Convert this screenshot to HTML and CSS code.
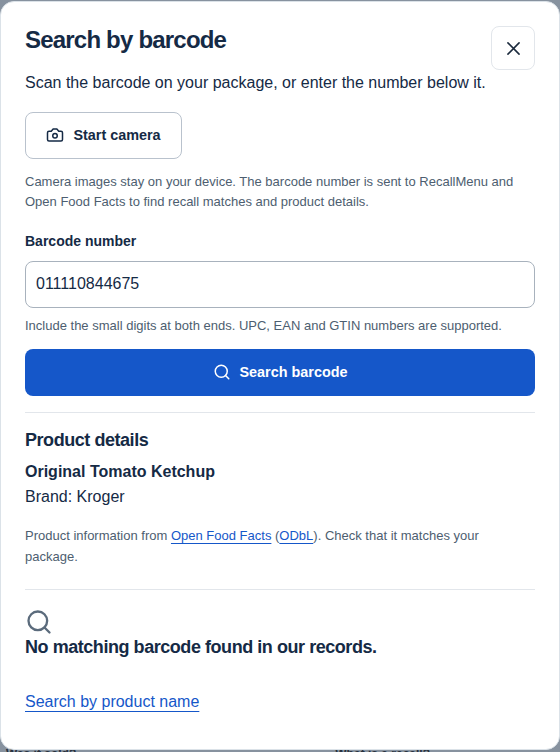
FILE: index.html
```html
<!DOCTYPE html>
<html lang="en">
<head>
<meta charset="utf-8">
<title>Search by barcode</title>
<link rel="stylesheet" href="styles.css">
</head>
<body>
<div class="backdrop-text"><span>Was it sold?</span><span>What is a recall?</span></div>
<main class="dialog">
  <header class="head">
    <h1>Search by barcode</h1>
    <button class="close" aria-label="Close">
      <svg width="13" height="13" viewBox="0 0 14 14" fill="none" stroke="#1b2a3d" stroke-width="1.7" stroke-linecap="round"><path d="M1 1l12 12M13 1L1 13"/></svg>
    </button>
  </header>
  <p class="lead">Scan the barcode on your package, or enter the number below it.</p>
  <button class="camera">
    <svg width="18" height="18" viewBox="0 0 24 24" fill="none" stroke="#152a45" stroke-width="2" stroke-linecap="round" stroke-linejoin="round"><path d="M14.5 4h-5L7 7H4a2 2 0 0 0-2 2v9a2 2 0 0 0 2 2h16a2 2 0 0 0 2-2V9a2 2 0 0 0-2-2h-3l-2.5-3z"/><circle cx="12" cy="13" r="3"/></svg>
    <span>Start camera</span>
  </button>
  <p class="note privacy">Camera images stay on your device. The barcode number is sent to RecallMenu and Open Food Facts to find recall matches and product details.</p>
  <label class="field-label" for="code">Barcode number</label>
  <input class="code" id="code" value="011110844675">
  <p class="note hint">Include the small digits at both ends. UPC, EAN and GTIN numbers are supported.</p>
  <button class="search">
    <svg width="18" height="18" viewBox="0 0 24 24" fill="none" stroke="#fff" stroke-width="2" stroke-linecap="round"><circle cx="11" cy="11" r="8"/><path d="M21 21l-4.3-4.3"/></svg>
    <span>Search barcode</span>
  </button>
  <section class="details">
    <h2>Product details</h2>
    <p class="product">Original Tomato Ketchup</p>
    <p class="brand">Brand: Kroger</p>
    <p class="note source">Product information from <a href="#">Open Food Facts</a> (<a href="#">ODbL</a>). Check that it matches your package.</p>
  </section>
  <section class="result">
    <svg class="result-icon" width="28" height="28" viewBox="0 0 24 24" fill="none" stroke="#5b6b7c" stroke-width="2" stroke-linecap="round"><circle cx="11" cy="11" r="8"/><path d="M21 21l-4.3-4.3"/></svg>
    <h3>No matching barcode found in our records.</h3>
    <a class="name-link" href="#">Search by product name</a>
  </section>
</main>
</body>
</html>
```
FILE: styles.css
```css
* { box-sizing: border-box; }
html, body { margin: 0; height: 752px; overflow: hidden; }
body {
  background: #87929f;
  font-family: "Liberation Sans", Arial, sans-serif;
  color: #152a45;
  position: relative;
  padding: 1px 0 2px;
}
.backdrop-text {
  position: absolute;
  left: 6px; right: 130px; top: 746px;
  display: flex; justify-content: space-between;
  font-size: 12px; line-height: 16px; font-weight: 700; color: #26303c;
}
.dialog {
  position: relative;
  height: 749px;
  background: #fff;
  border: 1px solid #dbe2e8;
  border-radius: 14px;
  padding: 23px 24px;
  display: flex;
  flex-direction: column;
  align-items: stretch;
}
.head { display: flex; justify-content: space-between; align-items: flex-start; height: 45px; }
h1 { margin: 0; font-size: 24px; line-height: 30px; font-weight: 700; letter-spacing: -0.8px; color: #152a45; }
.close {
  width: 44px; height: 44px; margin: 1px 0 0;
  background: #fff;
  border: 1px solid #e2e6eb;
  border-radius: 8px;
  display: flex; align-items: center; justify-content: center;
  padding: 0;
}
.lead { margin: 1px 0 0; font-size: 16px; line-height: 24px; color: #152a45; }
.camera {
  margin-top: 17px;
  width: 157px; height: 47px;
  background: #fff;
  border: 1px solid #b9c2cd;
  border-radius: 8px;
  display: flex; align-items: center; justify-content: center; gap: 9px;
  font: 700 14.4px "Liberation Sans", Arial, sans-serif;
  color: #152a45;
  padding: 0 0 1px;
}
.note { margin: 0; font-size: 13px; line-height: 20.8px; color: #4d5e70; }
.privacy { margin-top: 12.5px; }
.field-label { margin-top: 17.5px; font-size: 14px; line-height: 20px; font-weight: 700; color: #152a45; }
.code {
  margin-top: 10px;
  height: 47px; width: 100%;
  flex: none;
  border: 1px solid #a8b2bd;
  border-radius: 8px;
  padding: 0 10px;
  font: 16px "Liberation Sans", Arial, sans-serif;
  color: #152a45;
  background: #fff;
}
.hint { margin-top: 8px; }
.search {
  margin-top: 13px;
  height: 47px; width: 100%;
  flex: none;
  background: #1557c9;
  border: 0; border-radius: 8px;
  display: flex; align-items: center; justify-content: center; gap: 9px;
  font: 700 14.4px "Liberation Sans", Arial, sans-serif;
  color: #fff;
  padding: 0 0 1px;
}
.details { margin-top: 16px; border-top: 1px solid #e2e6eb; padding-top: 16px; }
h2 { margin: 0; font-size: 18px; line-height: 22px; font-weight: 700; letter-spacing: -0.45px; color: #152a45; }
.product { margin: 10px 0 0; font-size: 16px; line-height: 22px; font-weight: 700; color: #152a45; }
.brand { margin: 3px 0 0; font-size: 16px; line-height: 22px; color: #152a45; }
.source { margin-top: 18px; }
.source a { color: #1557c9; text-decoration: underline; text-underline-offset: 3px; }
.result { margin-top: 21px; border-top: 1px solid #e2e6eb; padding-top: 18px; display: flex; flex-direction: column; align-items: flex-start; }
.result-icon { display: block; }
h3 { margin: 0; font-size: 18px; line-height: 22px; font-weight: 700; letter-spacing: -0.45px; color: #152a45; }
.name-link { margin-top: 33px; font-size: 16px; line-height: 22px; color: #1557c9; text-decoration: underline; text-underline-offset: 4px; }
```
